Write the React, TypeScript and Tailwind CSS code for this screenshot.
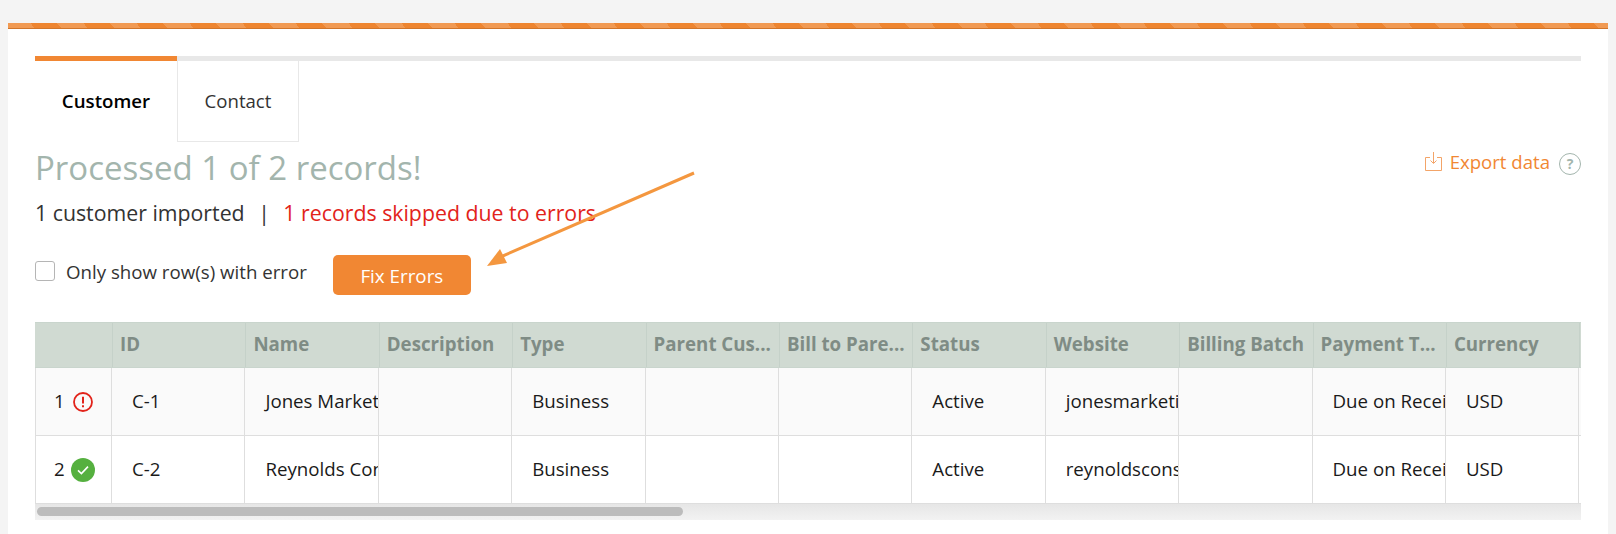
const rows = [
  { n: "1", ok: false, id: "C-1", name: "Jones Marketing", site: "jonesmarketing.com" },
  { n: "2", ok: true, id: "C-2", name: "Reynolds Consulting", site: "reynoldsconsulting.com" },
];

const headers = ["ID", "Name", "Description", "Type", "Parent Cus...", "Bill to Pare...", "Status", "Website", "Billing Batch", "Payment T...", "Currency"];

function ErrorIcon() {
  return (
    <svg width="20" height="20" viewBox="0 0 20 20" fill="none">
      <circle cx="10" cy="10" r="9" stroke="#e2231a" strokeWidth="1.8" />
      <path d="M10 4.8v6.6" stroke="#e2231a" strokeWidth="2" />
      <path d="M10 13.2v2" stroke="#e2231a" strokeWidth="2" />
    </svg>
  );
}

function OkIcon() {
  return (
    <svg width="24" height="24" viewBox="0 0 24 24" fill="none">
      <circle cx="12" cy="12" r="12" fill="#55b03f" />
      <path d="M7 12.4l3.4 3.2L17 8.6" stroke="#fff" strokeWidth="1.6" />
    </svg>
  );
}

function Cell({ text }: { text?: string }) {
  return (
    <div className="flex h-full w-[133.4px] shrink-0 items-center overflow-hidden whitespace-nowrap border-r border-[#dedede] pl-[20px]">
      {text}
    </div>
  );
}

export default function App() {
  return (
    <div className="relative h-[534px] w-[1616px] overflow-hidden bg-[#f4f4f4] pt-[23px] pl-[8px] font-['Open_Sans',sans-serif]">
      <div className="h-[511px] w-[1600px] bg-white">
        <div className="h-[6px] border-b border-[#d0752a] bg-[repeating-linear-gradient(50deg,#f19a53_0,#f19a53_20.3px,#ee8530_20.3px,#ee8530_40.6px)]" />

        <div className="pl-[27px] pr-[27px] pt-[27px]">
          <div className="flex h-[86px] border-t-[5px] border-[#e8e8e8]">
            <div className="-mt-[5px] flex h-[86px] w-[142px] items-center justify-center border-t-[5px] border-[#f18733] text-[18.7px] font-semibold text-black">
              Customer
            </div>
            <div className="flex h-[81px] w-[122px] items-center justify-center border-x border-b border-[#e8e8e8] text-[18.6px] text-[#333]">
              Contact
            </div>
          </div>

          <div className="flex items-start justify-between">
            <div className="mt-[5px] text-[33px] leading-[42px] text-[#a3b5ad]">Processed 1 of 2 records!</div>
            <div className="mt-[6px] flex items-center text-[18.6px] text-[#f18733]">
              <svg width="17" height="19" viewBox="0 0 17 19" fill="none" stroke="#f3a468" strokeWidth="1" className="mr-[8px]">
                <path d="M5 5.5H.5v13h16v-13H12" />
                <path d="M8.5 0v11M5.5 8.5l3 3 3-3" />
              </svg>
              <span>Export data</span>
              <span className="ml-[9px] mt-[4px] flex h-[22px] w-[22px] items-center justify-center rounded-full border border-[#a3b5ad] text-[14px] font-bold text-[#a3b5ad]">
                ?
              </span>
            </div>
          </div>

          <div className="mt-[10px] flex text-[21.3px] leading-[28px] text-[#333]">
            <span>1 customer imported</span>
            <span className="mx-[13.5px]">|</span>
            <span className="text-[#e2231a]">1 records skipped due to errors</span>
          </div>

          <div className="mt-[28px] flex h-[40px] items-center">
            <span className="-mt-[8px] h-[20px] w-[20px] rounded-[3px] border border-[#b5b5b5] bg-white" />
            <span className="-mt-[5px] ml-[11px] text-[18.7px] text-[#333]">Only show row(s) with error</span>
            <button className="ml-[26px] h-[40px] w-[138px] rounded-[5px] bg-[#f18733] pt-[2px] text-[18.8px] text-white">Fix Errors</button>
          </div>

          <div className="mt-[27px] w-[1546px] overflow-hidden">
            <div className="flex h-[46px] items-center border-y border-[#c9d5cd] bg-[#d0dad2] text-[18.7px] font-bold whitespace-nowrap text-[#7f8c85]">
              <div className="h-full w-[78px] shrink-0 border-r border-[#c5d1c9]" />
              {headers.map((h) => (
                <div key={h} className="flex h-full w-[133.4px] shrink-0 items-center overflow-hidden border-r border-[#c5d1c9] pb-[2px] pl-[7px]">
                  {h}
                </div>
              ))}
            </div>

            {rows.map((r, i) => (
              <div
                key={r.id}
                className={`flex h-[68px] border-b border-[#dedede] text-[18.7px] text-[#1a1a1a] ${i === 0 ? "bg-[#fafafa]" : "bg-white"}`}
              >
                <div className="flex h-full w-[77px] shrink-0 items-center border-x border-[#dedede] pl-[18px]">
                  <span className="w-[12px]">{r.n}</span>
                  <span className="ml-[4px] flex w-[26px] justify-center">{r.ok ? <OkIcon /> : <ErrorIcon />}</span>
                </div>
                <Cell text={r.id} />
                <Cell text={r.name} />
                <Cell />
                <Cell text="Business" />
                <Cell />
                <Cell />
                <Cell text="Active" />
                <Cell text={r.site} />
                <Cell />
                <Cell text="Due on Receipt" />
                <Cell text="USD" />
              </div>
            ))}

            <div className="h-[16px] bg-[linear-gradient(#e6e6e6,#f2f2f2)] pt-[3px] pl-[2px]">
              <div className="h-[9px] w-[646px] rounded-full bg-[#bcbcbc]" />
            </div>
          </div>
        </div>
      </div>

      <svg className="absolute left-[480px] top-[165px]" width="220" height="110" viewBox="0 0 220 110" fill="none">
        <path d="M214 8L18 93" stroke="#f4973f" strokeWidth="3" />
        <path d="M7 101L20 84l7 14z" fill="#f4973f" />
      </svg>
    </div>
  );
}
